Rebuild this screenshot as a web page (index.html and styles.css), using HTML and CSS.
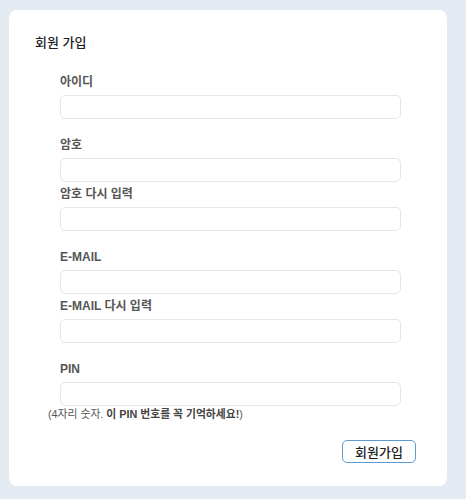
FILE: index.html
```html
<!DOCTYPE html>
<html lang="ko">
<head>
<meta charset="utf-8">
<title>회원 가입</title>
<link rel="stylesheet" href="styles.css">
</head>
<body>
<div class="card">
  <h1 class="title">회원 가입</h1>
  <form class="form">
    <div class="section">
      <label class="label">아이디</label>
      <input class="input" type="text">
    </div>
    <div class="section">
      <label class="label">암호</label>
      <input class="input" type="password">
      <label class="label">암호 다시 입력</label>
      <input class="input" type="password">
    </div>
    <div class="section">
      <label class="label">E-MAIL</label>
      <input class="input" type="text">
      <label class="label">E-MAIL 다시 입력</label>
      <input class="input" type="text">
    </div>
    <div class="section">
      <label class="label">PIN</label>
      <input class="input" type="text">
    </div>
    <p class="hint">(4자리 숫자. <b>이 PIN 번호를 꼭 기억하세요!</b>)</p>
    <div class="actions">
      <button class="btn" type="button">회원가입</button>
    </div>
  </form>
</div>
</body>
</html>
```

FILE: styles.css
```css
html, body {
  margin: 0;
  padding: 0;
  background: #e4eaf1;
}
body {
  padding: 10px 0 0 9px;
  font-family: "Noto Sans CJK KR", "Noto Sans", sans-serif;
}
.card {
  box-sizing: border-box;
  width: 438px;
  height: 476px;
  background: #ffffff;
  border-radius: 8px;
  padding: 22px 0 0 26px;
}
.title {
  margin: 0;
  height: 20px;
  font-size: 13px;
  line-height: 20px;
  font-weight: 500;
  color: #1e1e1e;
}
.form {
  width: 341px;
  margin: 22px 0 0 25px;
  display: flex;
  flex-direction: column;
}
.section {
  display: flex;
  flex-direction: column;
}
.section + .section {
  margin-top: 18px;
}
.label {
  display: block;
  height: 16px;
  overflow: visible;
  font-family: "Liberation Sans", "Noto Sans CJK KR", sans-serif;
  font-size: 12px;
  font-weight: bold;
  line-height: 16px;
  color: #555;
  margin-bottom: 5px;
}
.input + .label {
  margin-top: 4px;
}
.input {
  box-sizing: border-box;
  width: 341px;
  height: 24px;
  margin: 0;
  border: 1px solid #e1e7ef;
  border-radius: 5px;
  background: #fff;
  outline: none;
  padding: 0 6px;
}
.hint {
  margin: 2px 0 0 -12px;
  height: 12px;
  white-space: nowrap;
  font-family: "Liberation Sans", "Noto Sans CJK KR", sans-serif;
  font-size: 10.8px;
  line-height: 12px;
  color: #555;
}
.hint b {
  font-weight: bold;
  color: #444;
}
.actions {
  display: flex;
  justify-content: flex-end;
  width: 356px;
  margin-top: 20px;
}
.btn {
  box-sizing: border-box;
  width: 74px;
  height: 23px;
  padding: 0;
  border: 1px solid #5b9bd5;
  border-radius: 5px;
  background: #fff;
  font-family: "Noto Sans CJK KR", sans-serif;
  font-size: 13px;
  font-weight: 500;
  color: #1e1e1e;
  line-height: 21px;
}
```
